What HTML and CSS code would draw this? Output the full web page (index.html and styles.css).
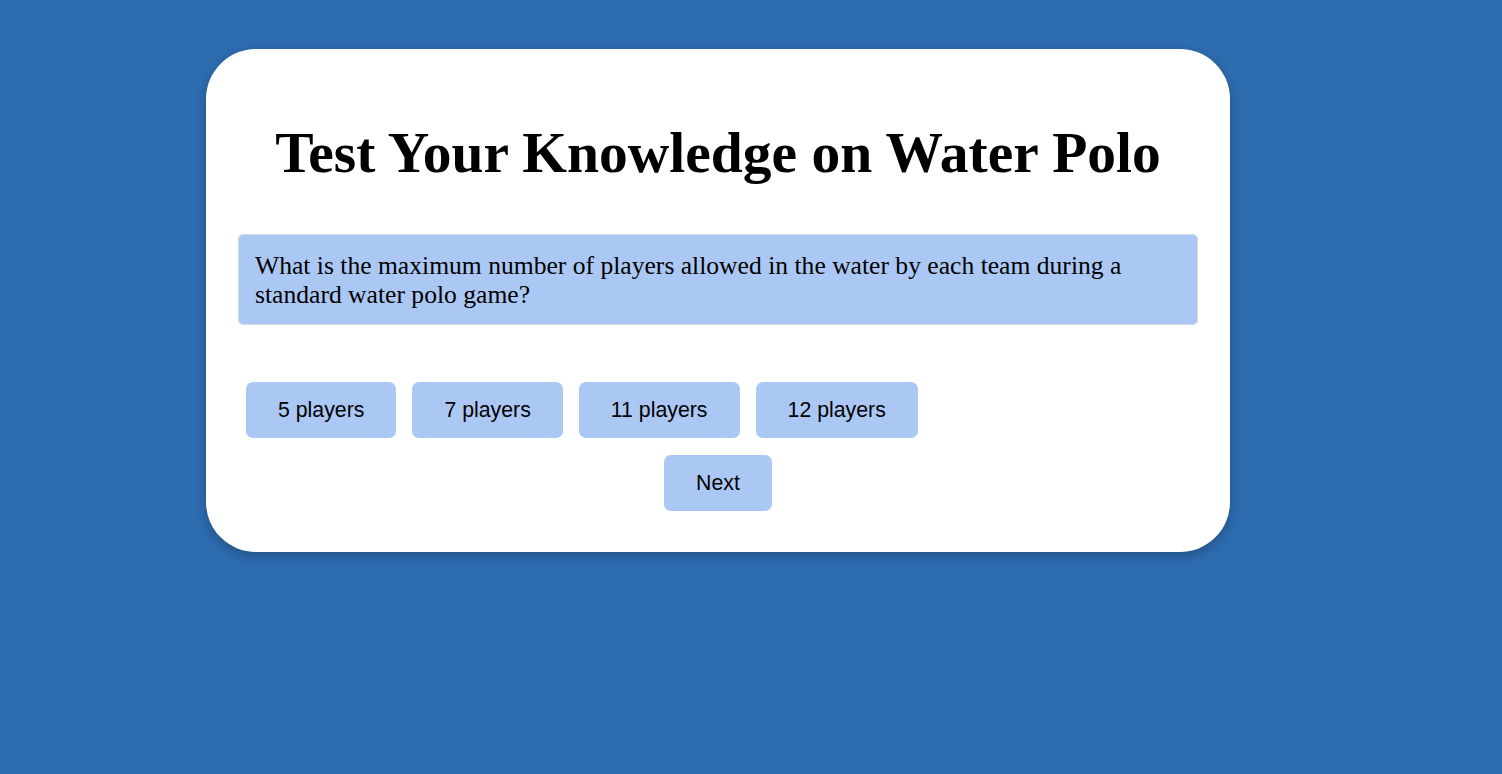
FILE: index.html
```html
<!DOCTYPE html>
<html lang="en">
<head>
<meta charset="utf-8">
<title>Water Polo Quiz</title>
<link rel="stylesheet" href="styles.css">
</head>
<body>
<main class="quiz">
  <h1 class="quiz-title">Test Your Knowledge on Water Polo</h1>
  <div class="question">What is the maximum number of players allowed in the water by each team during a standard water polo game?</div>
  <div class="options">
    <button class="btn">5 players</button>
    <button class="btn">7 players</button>
    <button class="btn">11 players</button>
    <button class="btn">12 players</button>
  </div>
  <div class="actions">
    <button class="btn">Next</button>
  </div>
</main>
</body>
</html>
```
FILE: styles.css
```css
html, body {
  margin: 0;
  padding: 0;
}
body {
  background: #2e6cb0;
  min-height: 774px;
  font-family: "Liberation Serif", "Times New Roman", serif;
  padding-top: 49px;
  box-sizing: border-box;
}
.quiz {
  width: 1024px;
  box-sizing: border-box;
  margin: 0 0 0 206px;
  background: #fff;
  border-radius: 50px;
  padding: 32px 32px 41px;
  box-shadow: 0 4px 12px rgba(0, 0, 0, 0.25);
}
.quiz-title {
  font-size: 57.5px;
  font-weight: bold;
  text-align: center;
  margin: 39px 0 48px;
  line-height: 66px;
}
.question {
  background: #abc8f5;
  border: 1px solid #d3dbe6;
  border-radius: 5px;
  padding: 16px 16px 15px;
  font-size: 25.6px;
  line-height: 29px;
}
.options {
  display: flex;
  flex-wrap: wrap;
  gap: 16px;
  padding: 0 8px;
  margin-top: 57px;
}
.actions {
  display: flex;
  justify-content: center;
  margin-top: 17px;
}
.btn {
  font-family: "Liberation Sans", Arial, sans-serif;
  font-size: 21.3px;
  color: #000;
  background: #abc8f5;
  border: none;
  border-radius: 7px;
  height: 56px;
  padding: 0 32px;
  cursor: pointer;
}
```
